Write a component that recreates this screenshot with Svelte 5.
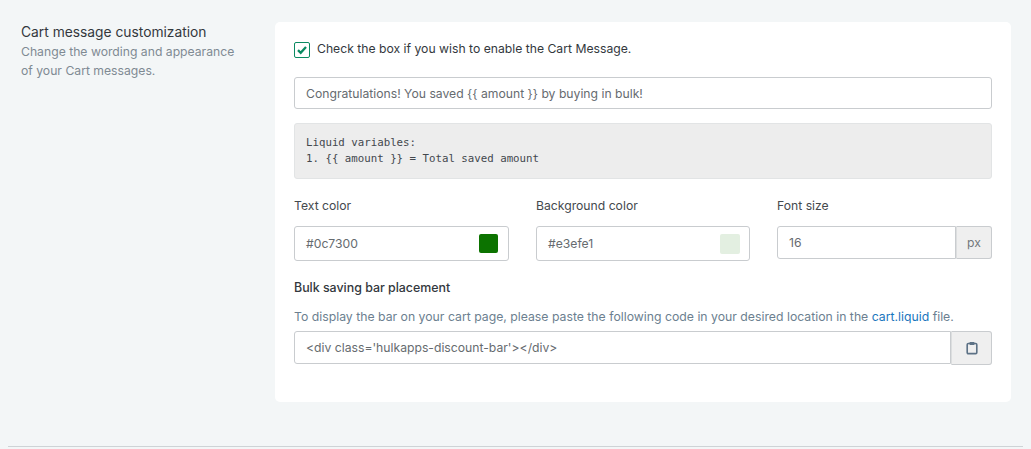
<script>
  const colors = [
    { label: 'Text color', value: '#0c7300', swatch: '#0c7300', size: 19, inset: 1 },
    { label: 'Background color', value: '#e3efe1', swatch: '#e3efe1', size: 20, inset: 0 }
  ];
</script>

<div class="page">
  <section class="layout">
    <div class="intro">
      <h2>Cart message customization</h2>
      <p>Change the wording and appearance of your Cart messages.</p>
    </div>

    <div class="card">
      <label class="check-row">
        <span class="checkbox">
          <svg viewBox="0 0 12 12" width="12" height="12" aria-hidden="true">
            <path d="M2 6.2 4.7 8.8 10 3" fill="none" stroke="#0b8a62" stroke-width="2.3" />
          </svg>
        </span>
        <span class="check-text">Check the box if you wish to enable the Cart Message.</span>
      </label>

      <div class="input message">Congratulations! You saved {'{{'} amount {'}}'} by buying in bulk!</div>

      <pre class="code">Liquid variables:
1. {'{{'} amount {'}}'} = Total saved amount</pre>

      <div class="fields">
        {#each colors as color}
          <div class="field">
            <span class="label">{color.label}</span>
            <div class="input color-input">
              {color.value}
              <span
                class="swatch"
                style="background: {color.swatch}; width: {color.size}px; height: {color.size}px; margin-right: {color.inset}px"
              ></span>
            </div>
          </div>
        {/each}
        <div class="field">
          <span class="label">Font size</span>
          <div class="group size-group">
            <div class="input joined">16</div>
            <span class="addon">px</span>
          </div>
        </div>
      </div>

      <h3>Bulk saving bar placement</h3>
      <p class="help">
        To display the bar on your cart page, please paste the following code in your desired location in the
        <span class="link">cart.liquid</span> file.
      </p>
      <div class="group code-group">
        <div class="input joined code-input">&lt;div class='hulkapps-discount-bar'&gt;&lt;/div&gt;</div>
        <span class="addon copy">
          <svg viewBox="0 0 14 16" width="12" height="14" aria-hidden="true">
            <rect x="1.4" y="2.8" width="11.2" height="11.8" rx="1.3" fill="none" stroke="#5d7286" stroke-width="1.9" />
            <rect x="4.2" y="1" width="5.6" height="3.4" rx="0.6" fill="#5d7286" />
          </svg>
        </span>
      </div>
    </div>
  </section>
  <hr />
</div>

<style>
  :global(body) {
    background: #f3f6f7;
    font-family: Inter, "Noto Sans", sans-serif;
    color: #2b3036;
  }

  .page {
    height: 449px;
    padding: 22px 8px 0;
    box-sizing: border-box;
    overflow: hidden;
  }

  .layout {
    display: flex;
    height: 380px;
    padding-right: 12px;
  }

  .intro {
    width: 267px;
    padding: 1px 0 0 13px;
    box-sizing: border-box;
    flex: none;
  }

  h2 {
    margin: 0;
    font-size: 13.8px;
    font-weight: 400;
    line-height: 19px;
    color: #33383d;
  }

  .intro p {
    margin: 0;
    width: 225px;
    font-size: 12.2px;
    line-height: 19px;
    color: #7f8a93;
  }

  .card {
    flex: 1;
    background: #fff;
    border-radius: 5px;
    padding: 20px 19px;
    font-size: 12.2px;
  }

  .check-row {
    display: flex;
    align-items: center;
    gap: 7px;
    height: 16px;
    color: #33383d;
  }

  .check-text {
    padding-bottom: 3px;
  }

  .checkbox {
    width: 14px;
    height: 14px;
    border: 1px solid #0b8a62;
    border-radius: 2px;
    display: flex;
    align-items: center;
    justify-content: center;
    background: #fff;
    flex: none;
  }

  .input {
    box-sizing: border-box;
    border: 1px solid #c9cccf;
    border-radius: 3px;
    padding: 0 11px;
    display: flex;
    align-items: center;
    background: #fff;
    color: #666b6f;
    white-space: pre;
  }

  .message {
    height: 32px;
    margin-top: 19px;
  }

  .code {
    margin: 14px 0 0;
    height: 56px;
    box-sizing: border-box;
    padding: 11px 11px;
    background: #ededed;
    border: 1px solid #e2e4e5;
    border-radius: 3px;
    font-family: "DejaVu Sans Mono", monospace;
    font-size: 10.75px;
    line-height: 16px;
    color: #43484d;
  }

  .fields {
    display: grid;
    grid-template-columns: 215px 214px 215px;
    justify-content: space-between;
    margin-top: 19px;
  }

  .label {
    display: block;
    line-height: 16px;
    color: #44494e;
  }

  .color-input {
    height: 35px;
    margin-top: 12px;
    justify-content: space-between;
    padding-right: 9px;
  }

  .swatch {
    border-radius: 2px;
  }

  .group {
    display: flex;
  }

  .size-group {
    height: 33px;
    margin-top: 12px;
  }

  .joined {
    flex: 1;
    border-radius: 3px 0 0 3px;
  }

  .addon {
    box-sizing: border-box;
    display: flex;
    align-items: center;
    justify-content: center;
    width: 36px;
    background: #efefef;
    border: 1px solid #c9cccf;
    border-left-color: #dcdedf;
    border-radius: 0 3px 3px 0;
    color: #72777b;
  }

  h3 {
    margin: 19px 0 0;
    font-size: 12.4px;
    font-weight: 500;
    line-height: 16px;
    color: #33383d;
  }

  .help {
    margin: 13px 0 0;
    line-height: 16px;
    font-size: 12.26px;
    color: #6c7f90;
    white-space: nowrap;
  }

  .link {
    color: #1a76bd;
  }

  .code-input {
    height: 33px;
  }

  .copy {
    width: 41px;
    height: 34px;
  }

  .code-group {
    margin-top: 6px;
  }

  hr {
    margin: 44px 0 0;
    border: 0;
    border-top: 1px solid #ced3d6;
  }
</style>
